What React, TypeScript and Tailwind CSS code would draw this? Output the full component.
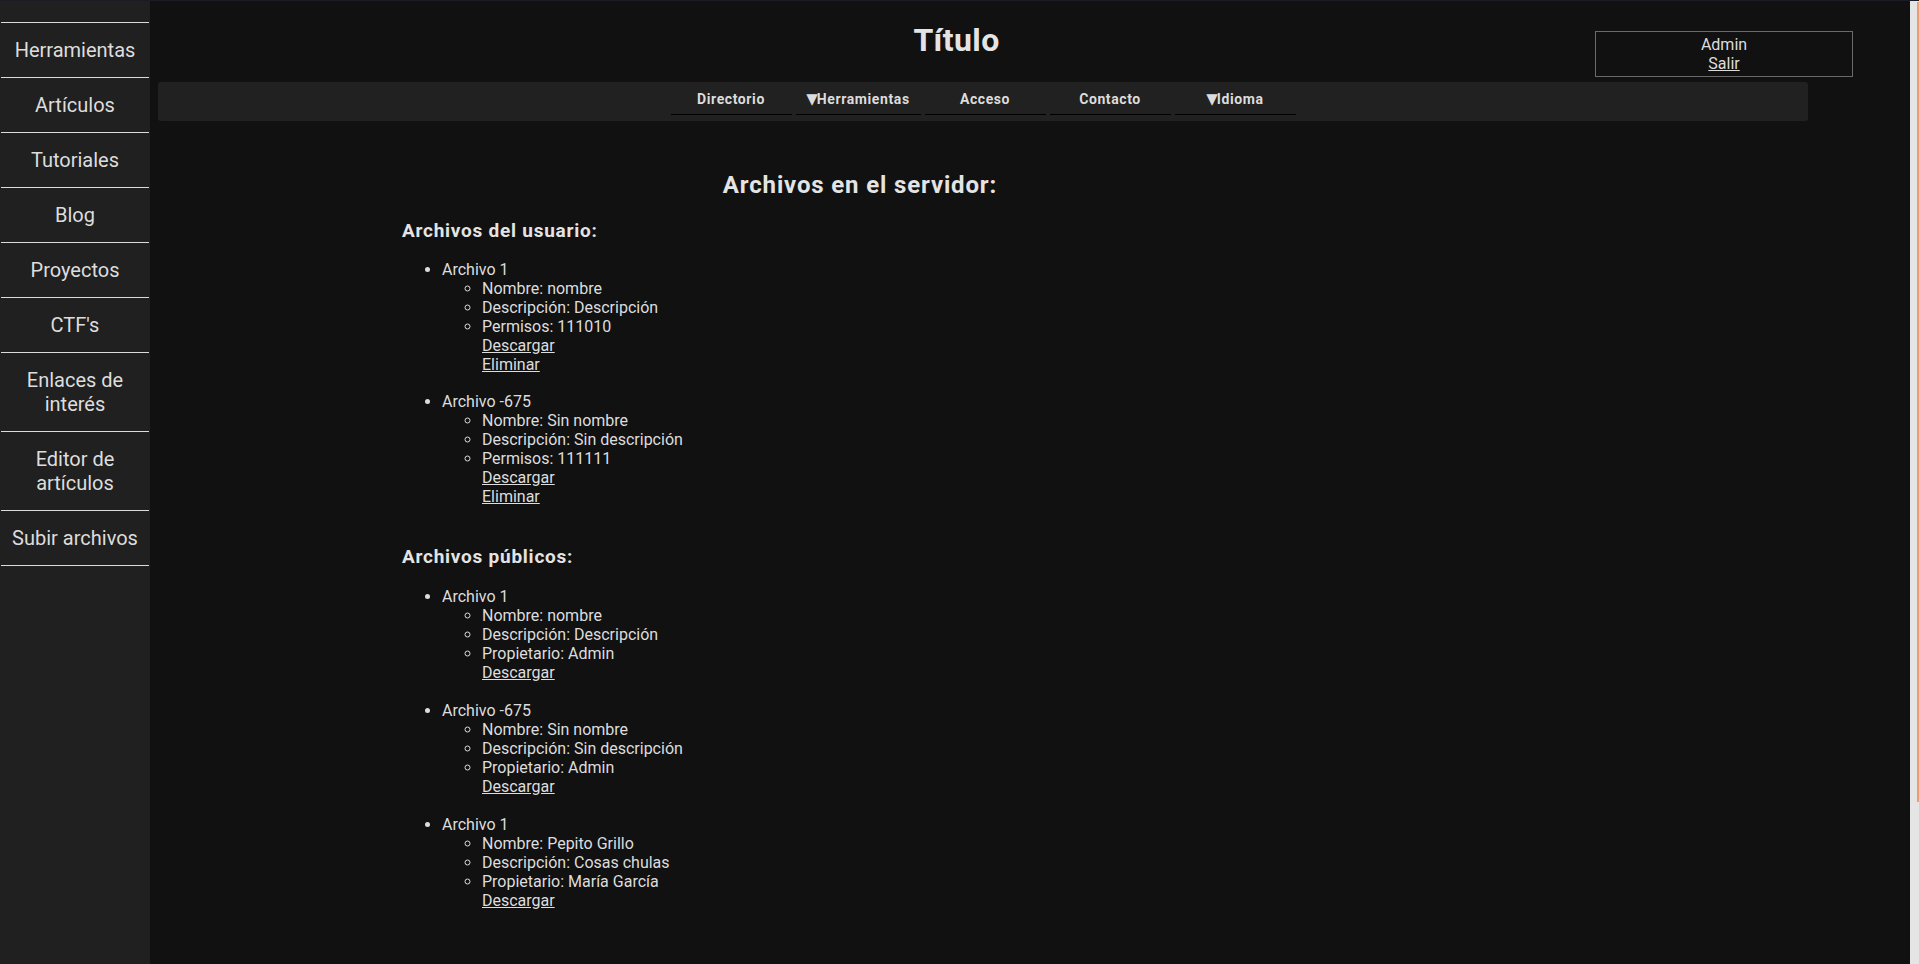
const sideLinks = [
  'Herramientas',
  'Artículos',
  'Tutoriales',
  'Blog',
  'Proyectos',
  "CTF's",
  'Enlaces de interés',
  'Editor de artículos',
  'Subir archivos',
]

const navLinks = [
  { label: 'Directorio', drop: false, w: 'w-[121px]' },
  { label: 'Herramientas', drop: true, w: 'w-[125px]' },
  { label: 'Acceso', drop: false, w: 'w-[121px]' },
  { label: 'Contacto', drop: false, w: 'w-[121px]' },
  { label: 'Idioma', drop: true, w: 'w-[121px]' },
]

type FileItem = {
  title: string
  fields: string[]
  actions: string[]
}

const userFiles: FileItem[] = [
  {
    title: 'Archivo 1',
    fields: ['Nombre: nombre', 'Descripción: Descripción', 'Permisos: 111010'],
    actions: ['Descargar', 'Eliminar'],
  },
  {
    title: 'Archivo -675',
    fields: ['Nombre: Sin nombre', 'Descripción: Sin descripción', 'Permisos: 111111'],
    actions: ['Descargar', 'Eliminar'],
  },
]

const publicFiles: FileItem[] = [
  {
    title: 'Archivo 1',
    fields: ['Nombre: nombre', 'Descripción: Descripción', 'Propietario: Admin'],
    actions: ['Descargar'],
  },
  {
    title: 'Archivo -675',
    fields: ['Nombre: Sin nombre', 'Descripción: Sin descripción', 'Propietario: Admin'],
    actions: ['Descargar'],
  },
  {
    title: 'Archivo 1',
    fields: ['Nombre: Pepito Grillo', 'Descripción: Cosas chulas', 'Propietario: María García'],
    actions: ['Descargar'],
  },
]

function FileList({ files, gap }: { files: FileItem[]; gap: string }) {
  return (
    <ul className="list-disc pl-[40px] text-[16px] leading-[19px]">
      {files.map((file, i) => (
        <li key={i} className={gap}>
          {file.title}
          <ul className="list-[circle] pl-[40px]">
            {file.fields.map((f) => (
              <li key={f}>{f}</li>
            ))}
          </ul>
          <div className="pl-[40px]">
            {file.actions.map((a) => (
              <a key={a} href="#" className="block w-fit underline">
                {a}
              </a>
            ))}
          </div>
        </li>
      ))}
    </ul>
  )
}

export default function App() {
  return (
    <div
      className="flex h-screen overflow-hidden border-t border-[#1b1c23] bg-[#111111] text-[#dddddd]"
      style={{ fontFamily: 'Roboto, "Noto Sans", sans-serif' }}
    >
      {/* Sidebar */}
      <aside className="w-[150px] shrink-0 bg-[#202020] pt-[21px]">
        <ul className="ml-[1px] w-[148px] border-t border-[#dcdcdc]">
          {sideLinks.map((l) => (
            <li
              key={l}
              className="border-b border-[#dcdcdc] px-[6px] py-[15px] text-center text-[20px] leading-[24px]"
            >
              {l}
            </li>
          ))}
        </ul>
      </aside>

      {/* Main */}
      <main className="flex-1">
        <header className="flex pl-[8px]">
          <div className="w-[1437px] pl-[160px] pt-[20px] text-center">
            <h1 className="text-[32px] font-bold leading-[38px] tracking-[0.4px] text-[#e4e4e4]">Título</h1>
          </div>
          <div className="mt-[30px] h-[46px] w-[258px] border border-[#6a6a6a] pt-[3px] text-center text-[16px] leading-[19px]">
            <div>Admin</div>
            <a href="#" className="underline">
              Salir
            </a>
          </div>
        </header>

        <nav className="ml-[8px] mt-[5px] flex h-[39px] w-[1650px] justify-center gap-[4px] rounded-[3px] bg-[#212121] pt-[9px]">
          {navLinks.map((n) => (
            <a
              key={n.label}
              href="#"
              className={`${n.w} h-fit border-b border-black pb-[6px] text-center text-[14px] font-bold leading-[17px] tracking-[0.6px] text-[#dcdcdc]`}
            >
              {n.drop && (
                <span
                  className="text-[15px] leading-[17px] tracking-[-1px]"
                  style={{ fontFamily: '"DejaVu Sans", sans-serif' }}
                >
                  ▼
                </span>
              )}
              {n.label}
            </a>
          ))}
        </nav>

        <section className="ml-[252px] w-[916px]">
          <h2 className="mt-[50px] text-center text-[24px] font-bold leading-[28px] tracking-[0.85px] text-[#e4e4e4]">
            Archivos en el servidor:
          </h2>

          <h3 className="mt-[21px] text-[19px] font-bold leading-[22px] tracking-[0.75px] text-[#e4e4e4]">
            Archivos del usuario:
          </h3>
          <div className="mt-[18px]">
            <FileList files={userFiles} gap="mb-[18px]" />
          </div>

          <h3 className="mt-[40px] text-[19px] font-bold leading-[22px] tracking-[0.75px] text-[#e4e4e4]">
            Archivos públicos:
          </h3>
          <div className="mt-[19px]">
            <FileList files={publicFiles} gap="mb-[19px]" />
          </div>
        </section>
      </main>

      {/* Scrollbar */}
      <div className="flex w-[9px] shrink-0 justify-end bg-[#e5e5e5] pt-[1px]">
        <div className="h-[800px] w-[2px] bg-[#f29b72]" />
      </div>
    </div>
  )
}
